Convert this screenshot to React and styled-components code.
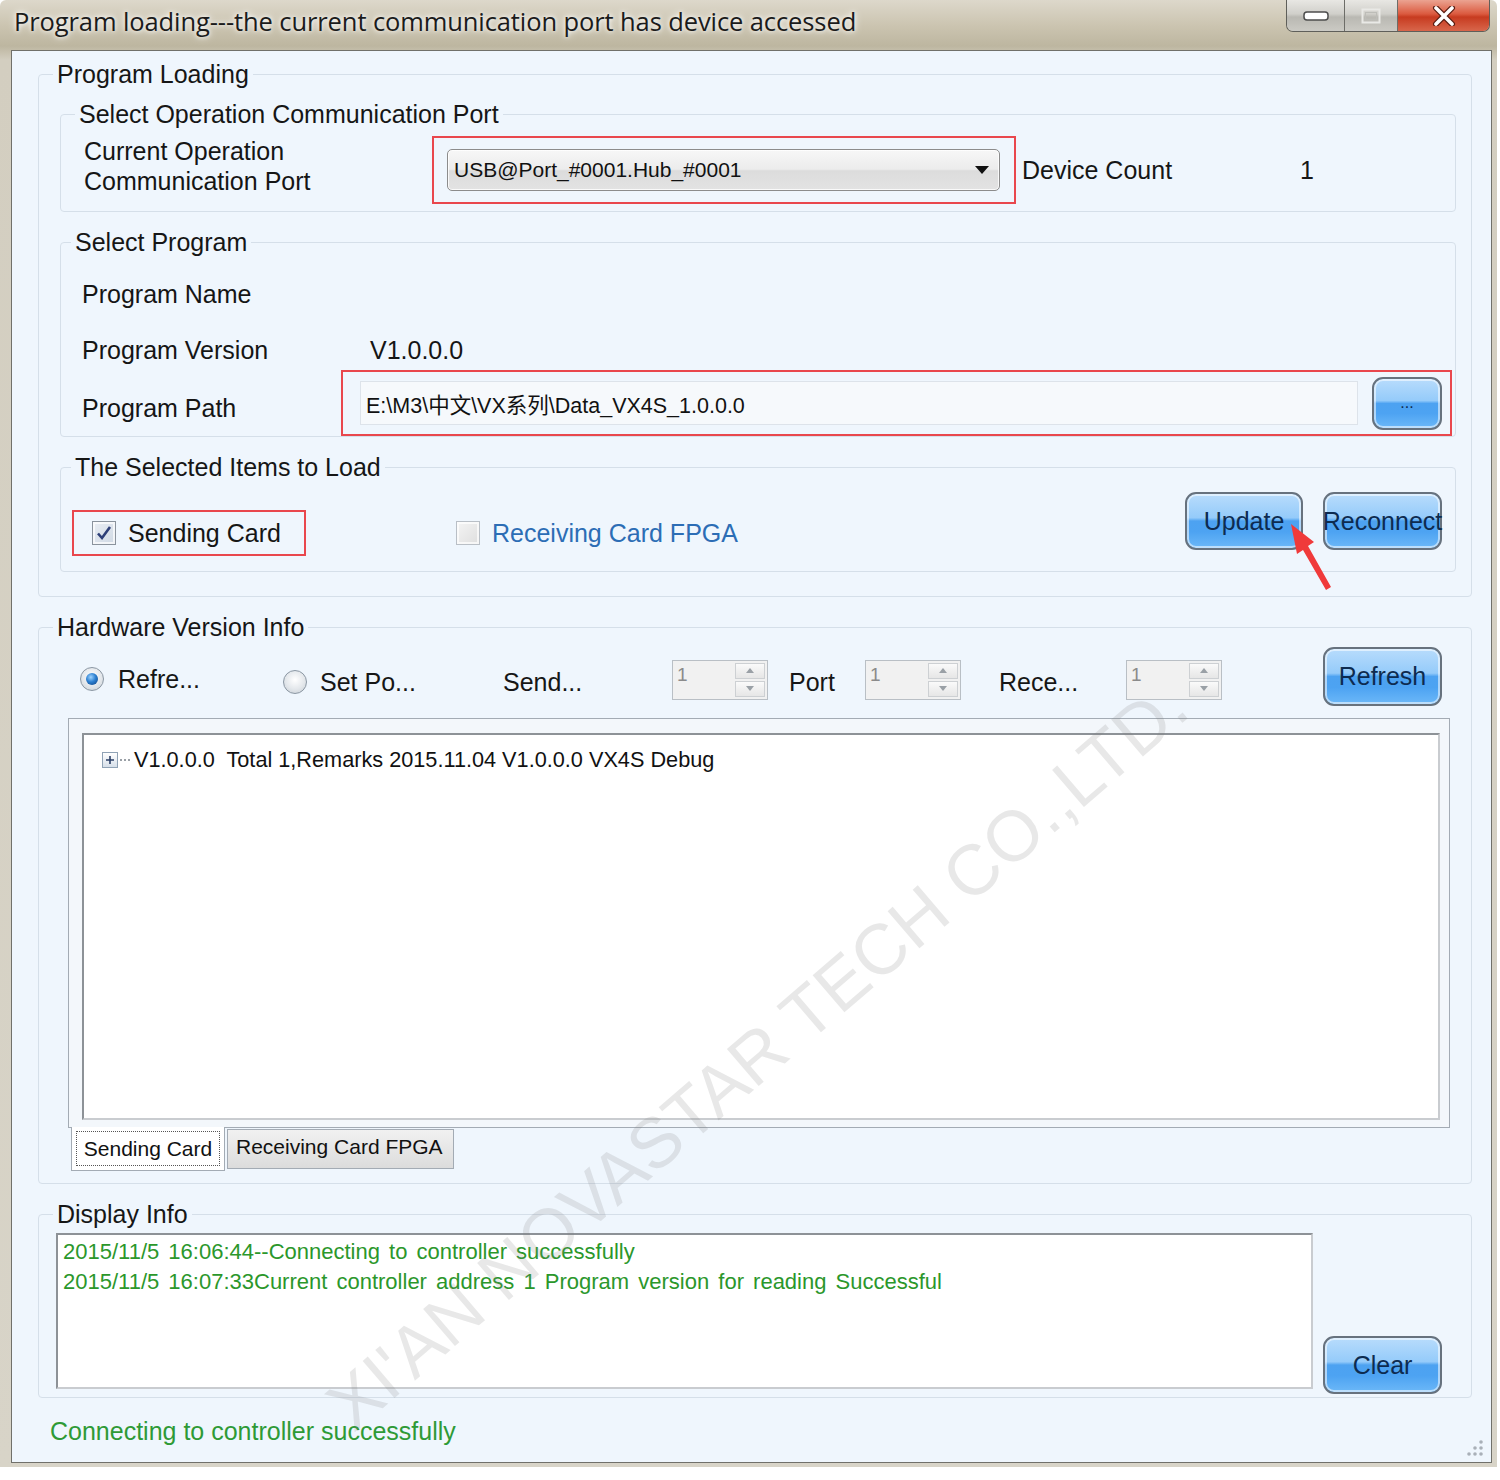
import styled, { createGlobalStyle } from 'styled-components';

const GlobalStyle = createGlobalStyle`
  html, body { margin: 0; padding: 0; background: #ffffff; }
  body { font-family: 'Liberation Sans', Arial, sans-serif; color: #151515; }
  *, *::before, *::after { box-sizing: border-box; }
`;

const Frame = styled.div`
  position: relative;
  width: 1497px;
  height: 1467px;
  padding: 0 5px 4px 11px;
  display: flex;
  flex-direction: column;
  background: linear-gradient(180deg, #ddd8cb 0px, #cbc4b0 26px, #bdb6a0 46px, #d3cec0 60px, #d8d4c8 100%);
  border-radius: 6px 6px 0 0;
  overflow: hidden;
`;

const TitleBar = styled.div`
  height: 50px;
  flex-shrink: 0;
  display: flex;
  align-items: flex-start;
`;

const Title = styled.div`
  font-family: 'Open Sans', 'Noto Sans', sans-serif;
  font-size: 25.5px;
  line-height: 34px;
  padding: 4px 0 0 3px;
  color: #1b1b1b;
  white-space: nowrap;
  letter-spacing: -0.1px;
  text-shadow: 0 0 8px #fff, 0 0 4px #fff;
`;

const WinControls = styled.div`
  margin-left: auto;
  margin-right: 2px;
  height: 32px;
  display: flex;
  border: 1px solid #5f5f5a;
  border-top: none;
  border-radius: 0 0 7px 7px;
  overflow: hidden;
`;

const WinBtn = styled.div`
  width: ${(p) => p.$w}px;
  display: flex;
  align-items: center;
  justify-content: center;
  background: ${(p) =>
    p.$close
      ? 'linear-gradient(180deg, #eba391 0%, #db5a3f 45%, #c73b20 55%, #d8664b 100%)'
      : 'linear-gradient(180deg, #e8e7e3 0%, #d0cfca 45%, #b9b8b2 55%, #cbcac4 100%)'};
  & + & {
    border-left: 1px solid #6d6d68;
  }
`;

const Client = styled.div`
  position: relative;
  flex: 1;
  background: #eff6fd;
  border: 1px solid #70706a;
  padding: 9px 19px 0 26px;
  display: flex;
  flex-direction: column;
  gap: 16px;
`;

const Group = styled.fieldset`
  margin: 0;
  padding: 0;
  min-width: 0;
  border: 1px solid #d5dfe9;
  border-radius: 4px;
`;

const Legend = styled.legend`
  margin-left: ${(p) => p.$offset ?? 14}px;
  padding: 0 4px;
  font-size: 25px;
  line-height: 28px;
  color: #161616;
`;

const GroupBody = styled.div`
  padding: ${(p) => p.$pad};
  display: flex;
  flex-direction: column;
  gap: ${(p) => p.$gap ?? 0}px;
`;

const Text = styled.span`
  font-size: 25px;
  line-height: 30px;
  white-space: nowrap;
  color: ${(p) => p.$color || '#161616'};
`;

/* ---- port row ---- */
const PortRow = styled.div`
  display: flex;
  align-items: center;
`;

const PortLabel = styled.div`
  width: 348px;
  font-size: 25px;
  line-height: 30px;
  margin-top: -8px;
`;

const RedFrame = styled.div`
  border: 2px solid #e9474d;
  display: flex;
  align-items: center;
`;

const PortFrame = styled(RedFrame)`
  width: 584px;
  height: 68px;
  padding: 0 14px 0 13px;
`;

const Combo = styled.div`
  flex: 1;
  height: 42px;
  border: 1px solid #8c8c8c;
  border-radius: 5px;
  background: linear-gradient(180deg, #f7f7f7 0%, #ececec 48%, #dcdcdc 52%, #e3e3e3 100%);
  box-shadow: inset 0 0 0 1px rgba(255, 255, 255, 0.8);
  display: flex;
  align-items: center;
  justify-content: space-between;
  padding: 0 10px 0 6px;
  font-size: 21px;
  color: #111;
`;

const DeviceCount = styled.div`
  margin-left: 6px;
  width: 278px;
`;

/* ---- program grid ---- */
const ProgramGrid = styled.div`
  display: grid;
  grid-template-columns: 259px 1fr;
  grid-template-rows: 48px 52px 66px;
  align-items: center;
  padding-left: 21px;
  margin-right: 3px;
`;

const Cell = styled.div`
  font-size: 25px;
  line-height: 30px;
  padding-top: ${(p) => p.$top || 0}px;
  padding-left: ${(p) => p.$left || 0}px;
  white-space: nowrap;
`;

const PathFrame = styled(RedFrame)`
  height: 66px;
  padding: 0 8px 0 17px;
  align-self: stretch;
`;

const PathInput = styled.div`
  flex: 1;
  height: 44px;
  background: #f6f9fc;
  border: 1px solid #dde3ea;
  display: flex;
  align-items: center;
  padding-left: 5px;
  font-family: 'Liberation Sans', 'Noto Sans CJK SC', sans-serif;
  font-size: 21.5px;
  color: #111;
  white-space: nowrap;
`;

const BlueButton = styled.button`
  width: ${(p) => p.$w || 119}px;
  height: ${(p) => p.$h || 58}px;
  flex-shrink: 0;
  margin: 0;
  padding: 0;
  border: 2px solid #67727e;
  border-radius: 11px;
  background: linear-gradient(180deg, #b8dcfc 0%, #95cbfa 44%, #4da2f1 50%, #4da3f2 70%, #6cb8f8 100%);
  box-shadow: inset 0 0 0 2px rgba(255, 255, 255, 0.55);
  color: #0d2b50;
  font-family: 'Liberation Sans', Arial, sans-serif;
  font-size: ${(p) => p.$fs || 25}px;
  display: flex;
  align-items: center;
  justify-content: center;
  white-space: nowrap;
  overflow: visible;
`;

/* ---- load items ---- */
const LoadRow = styled.div`
  display: flex;
  align-items: flex-start;
`;

const LoadOption = styled.div`
  margin-top: 18px;
  height: 46px;
  width: ${(p) => (p.$boxed ? '234px' : 'auto')};
  margin-left: ${(p) => p.$ml || 0}px;
  padding-left: ${(p) => (p.$boxed ? 18 : 2)}px;
  border: ${(p) => (p.$boxed ? '2px solid #e9474d' : 'none')};
  display: flex;
  align-items: center;
  gap: 12px;
`;

const CheckBox = styled.span`
  width: 24px;
  height: 24px;
  border: 1px solid ${(p) => (p.$checked ? '#8a939d' : '#b9bfc6')};
  background: ${(p) =>
    p.$checked
      ? 'linear-gradient(135deg, #e9eef4, #cfd9e4)'
      : 'linear-gradient(135deg, #f4f4f4, #dedede)'};
  box-shadow: inset 0 0 0 2px rgba(255, 255, 255, 0.7);
  display: flex;
  align-items: center;
  justify-content: center;
`;

const ButtonPair = styled.div`
  margin-left: auto;
  display: flex;
  gap: 20px;
`;

/* ---- hardware ---- */
const HwRow = styled.div`
  display: grid;
  grid-template-columns: 203px 220px 169px 117px 76px 134px 127px 96px 1fr 119px;
  align-items: center;
  height: 59px;
  padding-left: 12px;
`;

const HwItem = styled.div`
  display: flex;
  align-items: center;
  gap: ${(p) => p.$gap ?? 14}px;
  padding-top: ${(p) => p.$top ?? 10}px;
`;

const Radio = styled.span`
  width: 24px;
  height: 24px;
  border-radius: 50%;
  border: 1px solid #8b97a3;
  background: radial-gradient(circle at 50% 40%, #ffffff 0%, #e3e7eb 55%, #c5ccd3 100%);
  display: flex;
  align-items: center;
  justify-content: center;
  &::after {
    content: '';
    display: ${(p) => (p.$checked ? 'block' : 'none')};
    width: 12px;
    height: 12px;
    border-radius: 50%;
    background: radial-gradient(circle at 40% 35%, #9fd4ff 0%, #2c7fd0 45%, #0d3f7e 100%);
  }
`;

const Spin = styled.div`
  width: 96px;
  height: 40px;
  border: 1px solid #b9bfc5;
  background: #f1f1f1;
  display: flex;
  margin-top: ${(p) => p.$top ?? 10}px;
`;

const SpinValue = styled.div`
  flex: 1;
  font-size: 19px;
  line-height: 24px;
  color: #8b8b8b;
  padding: 2px 0 0 4px;
`;

const SpinArrows = styled.div`
  width: 30px;
  margin: 2px 2px 2px 0;
  display: flex;
  flex-direction: column;
  gap: 2px;
`;

const SpinArrow = styled.div`
  flex: 1;
  border: 1px solid #cdd0d3;
  background: linear-gradient(180deg, #fafafa, #e6e6e6);
  display: flex;
  align-items: center;
  justify-content: center;
`;

const TabFrame = styled.div`
  margin-top: 12px;
  margin-right: -8px;
  height: 410px;
  border: 1px solid #a3abb4;
  background: #f3f7fb;
  padding: 14px 9px 7px 13px;
`;

const Tree = styled.div`
  height: 100%;
  background: #ffffff;
  border: 2px solid #8d9297;
  border-right-color: #c9ccd0;
  border-bottom-color: #c9ccd0;
  padding: 12px 0 0 18px;
`;

const TreeItem = styled.div`
  display: flex;
  align-items: center;
  font-size: 21.7px;
  line-height: 26px;
  color: #111;
  white-space: pre;
`;

const PlusBox = styled.span`
  width: 16px;
  height: 16px;
  border: 1px solid #8fa2b5;
  background: linear-gradient(180deg, #ffffff, #d6dfe9);
  display: flex;
  align-items: center;
  justify-content: center;
`;

const Dots = styled.span`
  width: 10px;
  margin: 0 4px 0 2px;
  border-top: 2px dotted #9aa0a6;
`;

const Tabs = styled.div`
  display: flex;
  align-items: flex-start;
  padding-left: 3px;
  margin-top: -1px;
`;

const Tab = styled.div`
  width: ${(p) => p.$w}px;
  height: ${(p) => (p.$active ? 44 : 40)}px;
  margin-top: ${(p) => (p.$active ? 0 : 2)}px;
  padding: 4px;
  border: 1px solid #a3abb4;
  border-top: ${(p) => (p.$active ? 'none' : '1px solid #a3abb4')};
  background: ${(p) => (p.$active ? '#ffffff' : 'linear-gradient(180deg, #f1f1f1, #dcdcdc)')};
  font-size: 21px;
  color: #111;
  white-space: nowrap;
  & + & {
    margin-left: 2px;
  }
`;

const FocusRect = styled.div`
  height: 100%;
  border: 1px dotted #555;
  display: flex;
  align-items: center;
  justify-content: center;
`;

const TabLabel = styled.div`
  height: 100%;
  display: flex;
  align-items: center;
  padding: 0 0 4px 4px;
`;

/* ---- display info ---- */
const DisplayRow = styled.div`
  display: flex;
  align-items: flex-end;
  gap: 10px;
`;

const LogBox = styled.div`
  width: 1257px;
  height: 156px;
  background: #ffffff;
  border: 2px solid #8d9297;
  border-right-color: #c9ccd0;
  border-bottom-color: #c9ccd0;
  padding: 2px 0 0 5px;
`;

const LogLine = styled.div`
  font-size: 22px;
  line-height: 30px;
  color: #2b972b;
  white-space: pre;
  word-spacing: 3px;
`;

const Status = styled.div`
  padding-left: 12px;
  margin-top: 2px;
  font-size: 25px;
  line-height: 30px;
  color: #2e9a36;
`;

const Grip = styled.svg`
  position: absolute;
  right: 6px;
  bottom: 4px;
`;

const Watermark = styled.div`
  position: absolute;
  left: 757px;
  top: 1055px;
  transform: translate(-50%, -50%) rotate(-40.6deg);
  font-size: 71px;
  white-space: nowrap;
  color: rgba(130, 130, 130, 0.18);
  pointer-events: none;
  z-index: 5;
`;

const Arrow = styled.svg`
  position: absolute;
  left: 1280px;
  top: 515px;
  z-index: 6;
`;

function Check() {
  return (
    <svg width="18" height="18" viewBox="0 0 18 18">
      <path d="M3 9.5 L7 14 L15 3" fill="none" stroke="#2d3f78" strokeWidth="2.6" />
    </svg>
  );
}

function SpinBox({ top }) {
  return (
    <Spin $top={top}>
      <SpinValue>1</SpinValue>
      <SpinArrows>
        <SpinArrow>
          <svg width="8" height="5" viewBox="0 0 8 5">
            <path d="M0 5 L4 0 L8 5 Z" fill="#9aa0a6" />
          </svg>
        </SpinArrow>
        <SpinArrow>
          <svg width="8" height="5" viewBox="0 0 8 5">
            <path d="M0 0 L4 5 L8 0 Z" fill="#9aa0a6" />
          </svg>
        </SpinArrow>
      </SpinArrows>
    </Spin>
  );
}

export default function App() {
  return (
    <>
      <GlobalStyle />
      <Frame>
        <TitleBar>
          <Title>Program loading---the current communication port has device accessed</Title>
          <WinControls>
            <WinBtn $w={57}>
              <svg width="26" height="10" viewBox="0 0 26 10">
                <rect x="1" y="1" width="24" height="8" rx="3" fill="#fff" stroke="#4d4d4d" strokeWidth="1.5" />
              </svg>
            </WinBtn>
            <WinBtn $w={53}>
              <svg width="20" height="16" viewBox="0 0 20 16">
                <rect x="1.5" y="1.5" width="17" height="13" fill="none" stroke="#e9e9e6" strokeWidth="2" />
                <rect x="4.5" y="4.5" width="11" height="7" fill="none" stroke="#bdbdb8" strokeWidth="1" />
              </svg>
            </WinBtn>
            <WinBtn $w={92} $close>
              <svg width="24" height="20" viewBox="0 0 24 20">
                <path d="M4 2 L20 18 M20 2 L4 18" stroke="#5a1d12" strokeWidth="6" strokeLinecap="round" />
                <path d="M4 2 L20 18 M20 2 L4 18" stroke="#ffffff" strokeWidth="3.6" strokeLinecap="round" />
              </svg>
            </WinBtn>
          </WinControls>
        </TitleBar>

        <Client>
          <Group>
            <Legend>Program Loading</Legend>
            <GroupBody $pad="12px 15px 24px 21px" $gap={16}>
              <Group>
                <Legend>Select Operation Communication Port</Legend>
                <GroupBody $pad="8px 0 7px 23px">
                  <PortRow>
                    <PortLabel>
                      Current Operation
                      <br />
                      Communication Port
                    </PortLabel>
                    <PortFrame>
                      <Combo>
                        <span>USB@Port_#0001.Hub_#0001</span>
                        <svg width="14" height="8" viewBox="0 0 14 8">
                          <path d="M0 0 L14 0 L7 8 Z" fill="#111" />
                        </svg>
                      </Combo>
                    </PortFrame>
                    <DeviceCount>
                      <Text>Device Count</Text>
                    </DeviceCount>
                    <Text>1</Text>
                  </PortRow>
                </GroupBody>
              </Group>

              <Group>
                <Legend $offset={10}>Select Program</Legend>
                <GroupBody $pad="14px 0 0 0">
                  <ProgramGrid>
                    <Cell>Program Name</Cell>
                    <Cell />
                    <Cell $top={12}>Program Version</Cell>
                    <Cell $top={12} $left={29}>V1.0.0.0</Cell>
                    <Cell $top={10}>Program Path</Cell>
                    <PathFrame>
                      <PathInput>E:\M3\中文\VX系列\Data_VX4S_1.0.0.0</PathInput>
                      <BlueButton $w={70} $h={53} $fs={16} style={{ marginLeft: 14 }}>
                        ...
                      </BlueButton>
                    </PathFrame>
                  </ProgramGrid>
                </GroupBody>
              </Group>

              <Group>
                <Legend $offset={10}>The Selected Items to Load</Legend>
                <GroupBody $pad="11px 13px 15px 11px">
                  <LoadRow>
                    <LoadOption $boxed>
                      <CheckBox $checked>
                        <Check />
                      </CheckBox>
                      <Text>Sending Card</Text>
                    </LoadOption>
                    <LoadOption $ml={148}>
                      <CheckBox />
                      <Text $color="#2c6db5">Receiving Card FPGA</Text>
                    </LoadOption>
                    <ButtonPair>
                      <BlueButton $w={118}>Update</BlueButton>
                      <BlueButton $w={119}>Reconnect</BlueButton>
                    </ButtonPair>
                  </LoadRow>
                </GroupBody>
              </Group>
            </GroupBody>
          </Group>

          <Group>
            <Legend>Hardware Version Info</Legend>
            <GroupBody $pad="6px 29px 12px 29px">
              <HwRow>
                <HwItem $top={4}>
                  <Radio $checked />
                  <Text>Refre...</Text>
                </HwItem>
                <HwItem $gap={13}>
                  <Radio />
                  <Text>Set Po...</Text>
                </HwItem>
                <HwItem>
                  <Text>Send...</Text>
                </HwItem>
                <SpinBox top={6} />
                <HwItem>
                  <Text>Port</Text>
                </HwItem>
                <SpinBox top={6} />
                <HwItem>
                  <Text>Rece...</Text>
                </HwItem>
                <SpinBox top={6} />
                <span />
                <BlueButton $w={119} $h={59}>
                  Refresh
                </BlueButton>
              </HwRow>
              <TabFrame>
                <Tree>
                  <TreeItem>
                    <PlusBox>
                      <svg width="10" height="10" viewBox="0 0 10 10">
                        <path d="M1 5 H9 M5 1 V9" stroke="#2b3f66" strokeWidth="1.6" />
                      </svg>
                    </PlusBox>
                    <Dots />
                    {'V1.0.0.0  Total 1,Remarks 2015.11.04 V1.0.0.0 VX4S Debug'}
                  </TreeItem>
                </Tree>
              </TabFrame>
              <Tabs>
                <Tab $active $w={154}>
                  <FocusRect>Sending Card</FocusRect>
                </Tab>
                <Tab $w={227}>
                  <TabLabel>Receiving Card FPGA</TabLabel>
                </Tab>
              </Tabs>
            </GroupBody>
          </Group>

          <Group>
            <Legend>Display Info</Legend>
            <GroupBody $pad="5px 29px 8px 17px">
              <DisplayRow>
                <LogBox>
                  <LogLine>2015/11/5 16:06:44--Connecting to controller successfully</LogLine>
                  <LogLine>2015/11/5 16:07:33Current controller address 1 Program version for reading Successful</LogLine>
                </LogBox>
                <BlueButton $w={119} $h={58} style={{ marginBottom: -5 }}>
                  Clear
                </BlueButton>
              </DisplayRow>
            </GroupBody>
          </Group>

          <Status>Connecting to controller successfully</Status>

          <Grip width="20" height="20" viewBox="0 0 20 20">
            {[
              [16, 4],
              [16, 10],
              [10, 10],
              [16, 16],
              [10, 16],
              [4, 16],
            ].map(([cx, cy]) => (
              <circle key={`${cx}-${cy}`} cx={cx} cy={cy} r="1.8" fill="#a9b0b8" />
            ))}
          </Grip>
        </Client>

        <Watermark>XI'AN NOVASTAR TECH CO.,LTD.</Watermark>

        <Arrow width="60" height="80" viewBox="0 0 60 80">
          <path d="M11 9 L34 27 L28 31 L51 72 L46 75 L23 35 L17 39 Z" fill="#f03a3a" />
        </Arrow>
      </Frame>
    </>
  );
}
